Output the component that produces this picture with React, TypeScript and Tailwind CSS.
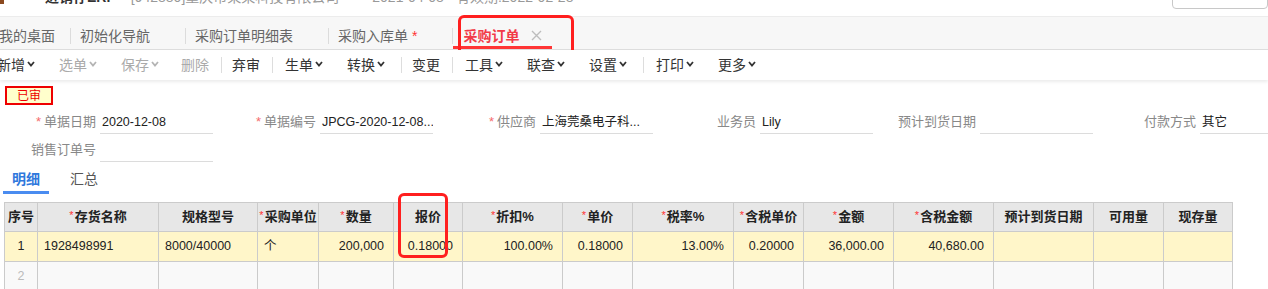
import React from 'react'

const toolbar = [
  { label: '新增', menu: true },
  { label: '选单', menu: true, off: true },
  { label: '保存', menu: true, off: true },
  { label: '删除', off: true },
  { sep: true },
  { label: '弃审' },
  { sep: true },
  { label: '生单', menu: true },
  { label: '转换', menu: true },
  { sep: true, wide: true },
  { label: '变更' },
  { sep: true },
  { label: '工具', menu: true },
  { label: '联查', menu: true },
  { label: '设置', menu: true },
  { sep: true, wide: true },
  { label: '打印', menu: true },
  { label: '更多', menu: true },
]

const fields = [
  { label: '单据日期', value: '2020-12-08', req: true },
  { label: '单据编号', value: 'JPCG-2020-12-08...', req: true },
  { label: '供应商', value: '上海莞桑电子科...', req: true },
  { label: '业务员', value: 'Lily' },
  { label: '预计到货日期', value: '' },
  { label: '付款方式', value: '其它' },
  { label: '销售订单号', value: '' },
]

const cols = [
  { w: 33, title: '序号' },
  { w: 121, title: '存货名称', req: true },
  { w: 99, title: '规格型号' },
  { w: 61, title: '采购单位', req: true },
  { w: 75, title: '数量', req: true },
  { w: 69, title: '报价' },
  { w: 100, title: '折扣%', req: true },
  { w: 70, title: '单价', req: true },
  { w: 101, title: '税率%', req: true },
  { w: 70, title: '含税单价', req: true },
  { w: 90, title: '金额', req: true },
  { w: 100, title: '含税金额', req: true },
  { w: 100, title: '预计到货日期' },
  { w: 70, title: '可用量' },
  { w: 69, title: '现存量' },
]

// align: c = center, l = left, r = right
const row = [
  ['1', 'c'],
  ['1928498991', 'l'],
  ['8000/40000', 'l'],
  ['个', 'l'],
  ['200,000', 'r'],
  ['0.18000', 'r'],
  ['100.00%', 'r'],
  ['0.18000', 'r'],
  ['13.00%', 'r'],
  ['0.20000', 'r'],
  ['36,000.00', 'r'],
  ['40,680.00', 'r'],
  ['', 'l'],
  ['', 'l'],
  ['', 'l'],
]

function Chevron({ muted }: { muted?: boolean }) {
  return (
    <svg width="8" height="6" viewBox="0 0 8 6" className="ml-[2px] -mt-[3px]">
      <polyline points="1,1 4,4.5 7,1" fill="none" stroke={muted ? '#b4b4b4' : '#333'} strokeWidth="1.8" />
    </svg>
  )
}

function TabSep() {
  return <div className="mt-[11px] h-[16px] w-px bg-[#dcdcdc]" />
}

export default function App() {
  return (
    <div className="relative h-[289px] w-[1268px] overflow-hidden bg-white font-['Liberation_Sans','Noto_Sans_CJK_SC',sans-serif]">
      {/* top strip, scrolled mostly out of view */}
      <div className="flex h-[16px] overflow-hidden bg-white">
        <div className="-mt-[11px] flex items-start whitespace-nowrap text-[14px] leading-[16px]">
          <span className="mt-[1px] h-[14px] w-[4px] bg-[#8b4a1f]" />
          <span className="ml-[41px] font-bold text-[#333]">进销存ERP</span>
          <span className="ml-[15px] text-[#999]">[942880]重庆市某某科技有限公司</span>
          <span className="ml-[33px] text-[#999]">2021-04-08</span>
          <span className="ml-[12px] text-[#999]">有效期:2022-02-28</span>
        </div>
        <div className="-mt-[21px] ml-auto h-[30px] w-[96px] rounded-[4px] border border-[#c8c8c8]" />
      </div>

      {/* tab bar */}
      <div className="flex h-[34px] border-y border-t-[#ececec] border-b-[#dedede] bg-[#f7f7f7]">
        <div className="-ml-[10px] flex h-[32px] whitespace-nowrap text-[14px] leading-[20px] text-[#666]">
          <div className="border-b-[3px] border-transparent pl-[9px] pr-[15px] pt-[9px]">我的桌面</div>
          <TabSep />
          <div className="border-b-[3px] border-transparent pl-[9px] pr-[35px] pt-[9px]">初始化导航</div>
          <TabSep />
          <div className="border-b-[3px] border-transparent pl-[9px] pr-[35px] pt-[9px]">采购订单明细表</div>
          <TabSep />
          <div className="border-b-[3px] border-transparent pl-[9px] pr-[35px] pt-[9px]">
            采购入库单<span className="ml-[4px] text-[#f33]">*</span>
          </div>
          <TabSep />
          <div className="flex items-start border-b-[3px] border-[#ff3535] pl-[10px] pr-[10px] pt-[9px]">
            <span className="font-bold text-[#f23a48]">采购订单</span>
            <svg width="11" height="11" viewBox="0 0 11 11" className="ml-[12px] mt-[4px]">
              <path d="M1 1L10 10M10 1L1 10" stroke="#bdbdbd" strokeWidth="1.4" />
            </svg>
          </div>
        </div>
      </div>

      {/* toolbar */}
      <div className="relative z-10 flex h-[30px] items-center whitespace-nowrap bg-white text-[14px] shadow-[0_2px_3px_rgba(0,0,0,0.08)]">
        <div className="-ml-[15px] flex items-center">
          {toolbar.map((t, i) =>
            t.sep ? (
              <div key={i} className={`h-[16px] w-px bg-[#dddddd] ${t.wide ? 'ml-[4px]' : ''}`} />
            ) : (
              <div
                key={i}
                className={`flex items-center ${t.menu ? 'pl-[12px] pr-[12px]' : 'pl-[10px] pr-[12px]'} ${t.off ? 'text-[#aaa]' : 'text-[#333]'}`}
              >
                {t.label}
                {t.menu && <Chevron muted={t.off} />}
              </div>
            )
          )}
        </div>
      </div>

      {/* status */}
      <div className="ml-[5px] mt-[6px] flex h-[19px] w-[48px] items-center justify-center border-2 border-[#e00] bg-[#ffffcc] text-[12px] text-[#e00]">
        已审
      </div>

      {/* header form */}
      <div className="mt-[1px] grid w-[1320px] grid-cols-[repeat(6,220px)]">
        {fields.map((f, i) => (
          <div key={i} className="flex h-[28px]">
            <div className="w-[96px] whitespace-nowrap pt-[5px] text-right text-[13px] leading-[22px] text-[#888]">
              {f.req && <span className="mr-[3px] text-[#f56c6c]">*</span>}
              {f.label}
            </div>
            <div className="ml-[4px] w-[113px] overflow-hidden whitespace-nowrap border-b border-[#dcdcdc] pl-[2px] pt-[5px] text-[12.5px] leading-[22px] text-[#222]">
              {f.value}
            </div>
          </div>
        ))}
      </div>

      {/* detail tabs */}
      <div className="flex h-[32px] text-[14px] leading-[24px]">
        <div className="ml-[3px] border-b-[3px] border-[#4a8cf0] px-[9px] pt-[5px] font-bold text-[#2f78dc]">明细</div>
        <div className="ml-[12px] border-b-[3px] border-transparent px-[9px] pt-[5px] text-[#555]">汇总</div>
      </div>

      {/* grid */}
      <table className="ml-[4px] mt-[8px] w-[1228px] table-fixed border-collapse text-[#222]">
        <colgroup>
          {cols.map((c, i) => (
            <col key={i} style={{ width: c.w }} />
          ))}
        </colgroup>
        <thead>
          <tr className="h-[29px] bg-[#e7e7e7]">
            {cols.map((c, i) => (
              <th key={i} className="whitespace-nowrap border border-[#cbcbcb] p-0 text-center text-[13px] font-bold text-[#222]">
                {c.req && <span className="mr-[1px] align-top text-[11px] font-normal text-[#ff3333]">*</span>}
                {c.title}
              </th>
            ))}
          </tr>
        </thead>
        <tbody>
          <tr className="h-[30px] bg-[#fff6c9]">
            {row.map(([v, a], i) => (
              <td
                key={i}
                className={`whitespace-nowrap border border-[#cbcbcb] text-[12.5px] ${
                  a === 'c' ? 'px-0 text-center' : a === 'r' ? 'pl-[4px] pr-[9px] text-right' : 'pl-[6px] pr-[4px] text-left'
                }`}
              >
                {v}
              </td>
            ))}
          </tr>
          <tr className="h-[30px] bg-[#f9f9f9]">
            {cols.map((_, i) => (
              <td key={i} className="border border-[#cbcbcb] text-center text-[12.5px] text-[#bbb]">
                {i === 0 ? '2' : ''}
              </td>
            ))}
          </tr>
        </tbody>
      </table>

      {/* review marks */}
      <div className="absolute left-[458px] top-[15px] h-[45px] w-[116px] rounded-[6px] border-[3px] border-[#ff1f1f]" />
      <div className="absolute left-[398px] top-[193px] h-[65px] w-[50px] rounded-[6px] border-[3px] border-[#ff1f1f]" />
    </div>
  )
}
